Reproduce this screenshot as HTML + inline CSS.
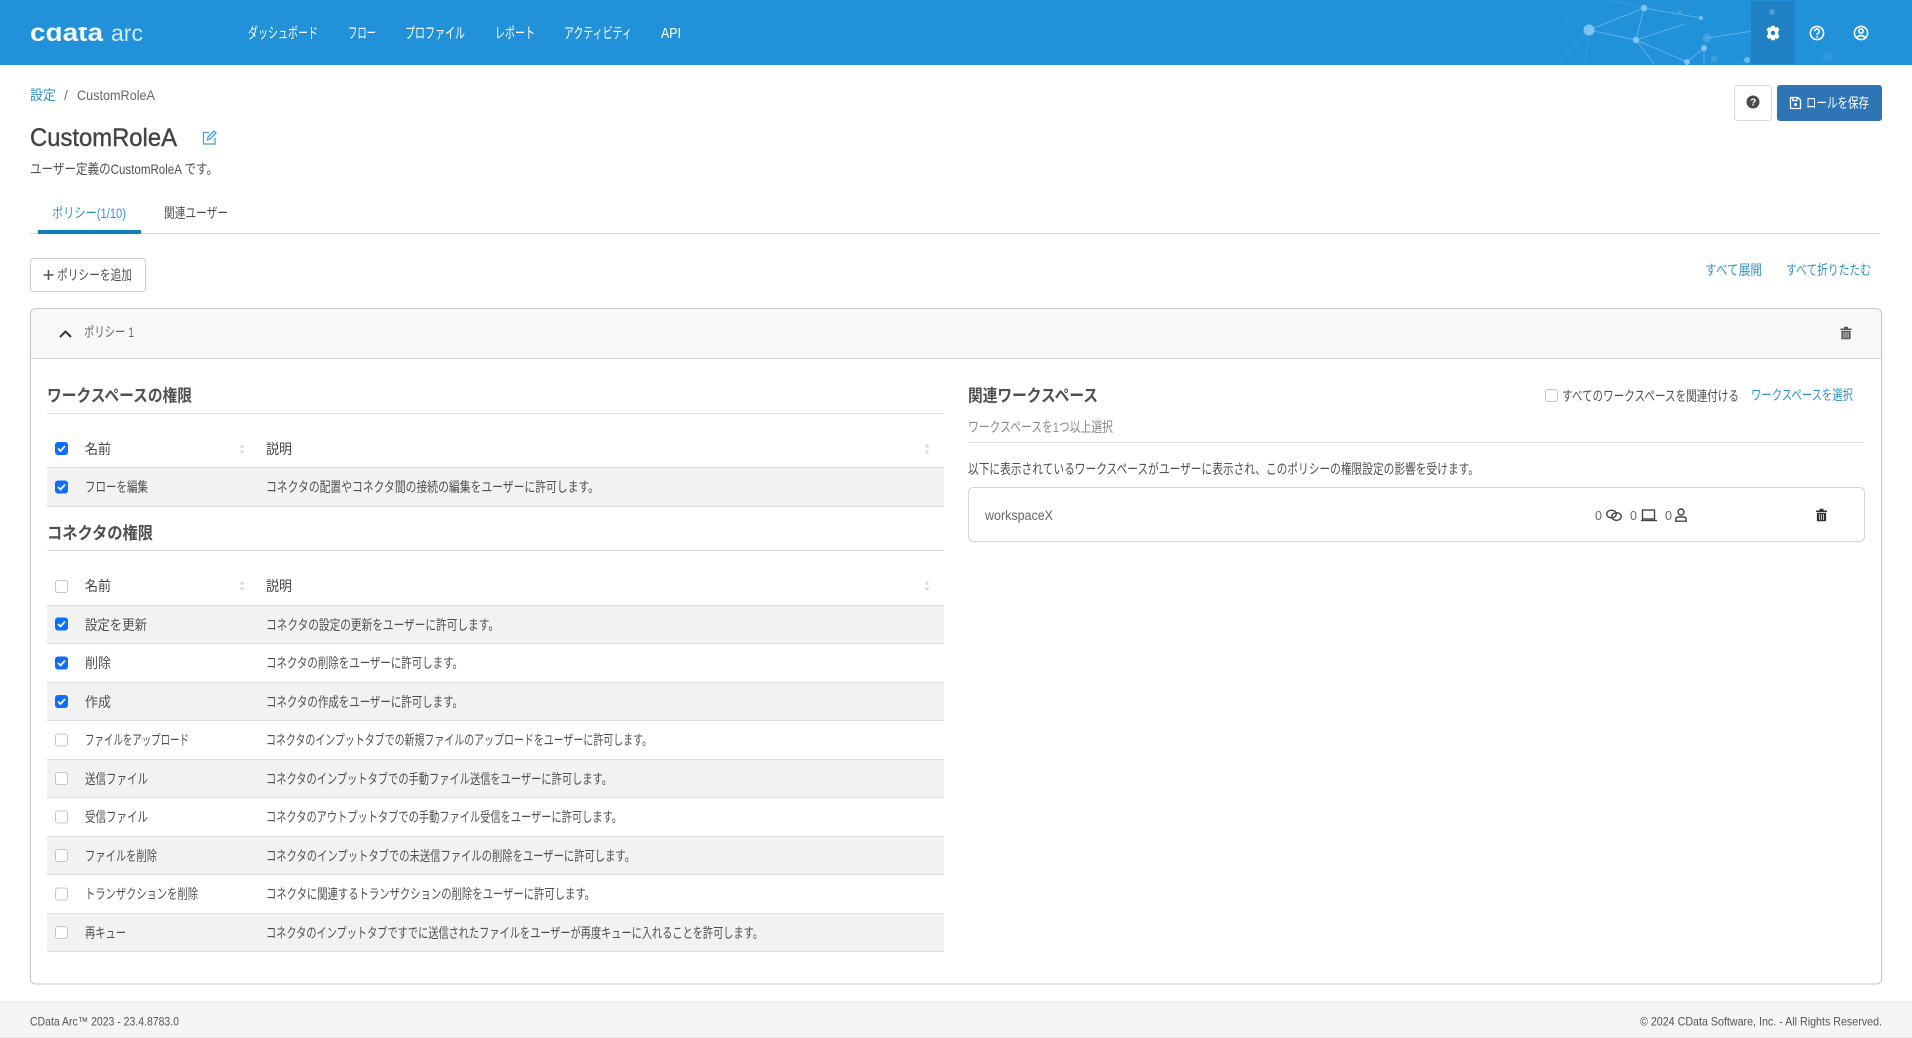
<!DOCTYPE html>
<html lang="ja"><head><meta charset="utf-8"><title>CustomRoleA</title>
<style>
html,body{margin:0;padding:0;background:#fff;width:1912px;height:1038px;overflow:hidden}
svg{display:block}
text{font-family:"Liberation Sans","Noto Sans CJK JP",sans-serif;font-size:14px;fill:#505050}
.n{fill:#fff;font-size:15px}
.l{fill:#3492cb}
.h{font-size:17px;font-weight:700;fill:#505050}
.th{fill:#444}
.g{fill:#8a8a8a}
.f{font-size:12px;fill:#555}
.line{stroke:#dfdfdf;stroke-width:1}
.ck{fill:#0d6efd}
.un{fill:#fff;stroke:#c4c4c4}
.tick{fill:none;stroke:#fff;stroke-width:1.8}
.sort{fill:#d8d8d8}
</style></head><body>
<svg width="1912" height="1038" viewBox="0 0 1912 1038" xmlns="http://www.w3.org/2000/svg" shape-rendering="geometricPrecision">
<defs>
<clipPath id="logo"><rect x="28" y="27" width="78" height="15"/></clipPath>
<g id="c"><rect class="ck" x="-6.5" y="-6.5" width="13" height="13" rx="3"/><path class="tick" d="M-3.5 0L-1 2.5L3.5-2.5"/></g>
<g id="u"><rect class="un" x="-6" y="-6" width="12" height="12" rx="2.5"/></g>
<g id="s"><path class="sort" d="M0-5L2.5-1.5H-2.5ZM0 5L2.5 1.5H-2.5Z"/></g>
<g id="tr"><path d="M-5.5-4.5H5.5V-3H-5.5ZM-2-6.2H2V-4.5H-2ZM-4.6-2.2H4.6V5.4Q4.6 6.2 3.8 6.2H-3.8Q-4.6 6.2-4.6 5.4Z" fill="currentColor"/><path d="M-2.1-1V5M0-1V5M2.1-1V5" stroke="#fff" stroke-width=".7"/></g>
</defs>

<!-- header -->
<rect width="1912" height="65" fill="#2191d9"/>
<rect y="65" width="1912" height="3" fill="#f3fbfa"/>
<g stroke="#8cc9f3" stroke-opacity=".55" stroke-width="1" fill="none">
<path d="M1589 30L1644 8L1636 40ZM1644 8L1701 18M1636 40L1687 62M1636 40L1685 24M1704 48L1687 62M1704 48V65M1636 40L1655 65M1707 38L1760 30"/>
</g>
<g stroke="#8cc9f3" stroke-opacity=".2" stroke-width="1" fill="none">
<path d="M1589 30L1585 65M1589 30L1560 60M1589 30L1550 8M1644 8L1610 0M1747 60L1735 65"/>
</g>
<g fill="#8ccaf5">
<circle cx="1589" cy="30" r="5.5" opacity=".85"/><circle cx="1644" cy="8" r="3.2" opacity=".85"/><circle cx="1636" cy="40" r="3.2" opacity=".85"/><circle cx="1701" cy="18" r="2" opacity=".8"/><circle cx="1704" cy="48" r="3" opacity=".85"/><circle cx="1687" cy="62" r="3" opacity=".85"/><circle cx="1747" cy="60" r="3" opacity=".7"/>
<circle cx="1707" cy="38" r="4.5" opacity=".3"/><circle cx="1680" cy="12" r="2" opacity=".3"/><circle cx="1714" cy="59" r="3.5" opacity=".25"/><circle cx="1827" cy="57" r="5" opacity=".12"/>
</g>
<rect x="1751" y="1" width="44" height="63" fill="#1f80c4"/>
<circle cx="1772" cy="12" r="3" fill="#8ccaf5" opacity=".4"/>
<text x="30" y="41" textLength="73" lengthAdjust="spacingAndGlyphs" clip-path="url(#logo)" style="font-size:25px;font-weight:700;fill:#f4fafe">cdata</text>
<text x="111" y="41" textLength="32" lengthAdjust="spacingAndGlyphs" style="font-size:23px;fill:#d5eafa">arc</text>
<text class="n" x="248" y="38" textLength="70" lengthAdjust="spacingAndGlyphs">ダッシュボード</text>
<text class="n" x="348" y="38" textLength="28" lengthAdjust="spacingAndGlyphs">フロー</text>
<text class="n" x="405" y="38" textLength="60" lengthAdjust="spacingAndGlyphs">プロファイル</text>
<text class="n" x="495" y="38" textLength="40" lengthAdjust="spacingAndGlyphs">レポート</text>
<text class="n" x="564" y="38" textLength="68" lengthAdjust="spacingAndGlyphs">アクティビティ</text>
<text class="n" x="661" y="38" textLength="20" lengthAdjust="spacingAndGlyphs">API</text>
<!-- gear -->
<g transform="translate(1773 33)" fill="#fff">
<path d="M-1.7-7.2H1.7L2.3-5.1L4.3-6L6.6-3.4L5.2-1.8V1.8L6.6 3.4L4.3 6L2.3 5.1L1.7 7.2H-1.7L-2.3 5.1L-4.3 6L-6.6 3.4L-5.2 1.8V-1.8L-6.6-3.4L-4.3-6L-2.3-5.1Z"/>
<circle r="2.2" fill="#1f80c4"/></g>
<g fill="none" stroke="#fff" stroke-width="1.6">
<circle cx="1817" cy="33" r="6.6"/><path d="M1814.7 31.2a2.3 2.3 0 1 1 3.6 1.9c-.8.5-1.3.9-1.3 1.8"/>
<circle cx="1861" cy="33" r="6.6"/><circle cx="1861" cy="31" r="2.2"/><path d="M1856.6 37.5q4.4-3.8 8.8 0"/>
</g>
<circle cx="1817" cy="37" r=".9" fill="#fff"/>

<!-- top actions -->
<rect x="1734.5" y="85.5" width="37" height="35" rx="3" fill="#fff" stroke="#dcdcdc"/>
<circle cx="1753" cy="102" r="6.5" fill="#4a4a4a"/>
<text x="1750.3" y="105.5" style="font-size:10px;font-weight:700;fill:#fff">?</text>
<rect x="1777" y="85" width="105" height="36" rx="3" fill="#2f74b5"/>
<g fill="none" stroke="#fff" stroke-width="1.3"><path d="M1790.5 97.5H1798L1800.5 100V108.5H1790.5Z"/><path d="M1792.8 97.5V100.5H1797V97.5"/></g><circle cx="1795.5" cy="104.5" r="1.5" fill="#fff"/>
<text x="1806" y="108" textLength="63" lengthAdjust="spacingAndGlyphs" style="fill:#fff">ロールを保存</text>

<!-- breadcrumb and title -->
<text class="l" x="30" y="100" textLength="26" lengthAdjust="spacingAndGlyphs">設定</text>
<text x="64" y="100" style="fill:#777">/</text>
<text x="77" y="100" textLength="78" lengthAdjust="spacingAndGlyphs" style="fill:#666">CustomRoleA</text>
<text x="30" y="146" textLength="147" lengthAdjust="spacingAndGlyphs" style="font-size:25px;fill:#444;stroke:#444;stroke-width:.4">CustomRoleA</text>
<g fill="none" stroke="#4a9fd8" stroke-width="1.3"><path d="M209 132.5H203.5V144H215V138"/><path d="M207.5 140L208 137L214 131L216 133L210 139Z"/></g>
<text x="30" y="174" textLength="188" lengthAdjust="spacingAndGlyphs">ユーザー定義のCustomRoleA です。</text>

<!-- tabs -->
<line class="line" x1="30" y1="233.5" x2="1880" y2="233.5"/>
<rect x="38" y="230" width="103" height="4" fill="#0f7fb5"/>
<text class="l" x="52" y="218" textLength="74" lengthAdjust="spacingAndGlyphs">ポリシー(1/10)</text>
<text x="164" y="218" textLength="64" lengthAdjust="spacingAndGlyphs">関連ユーザー</text>

<!-- add -->
<rect x="30.5" y="258.5" width="115" height="33" rx="3" fill="#fff" stroke="#cfcfcf"/>
<path d="M43.5 275H53.5M48.5 270V280" stroke="#555" stroke-width="1.6"/>
<text x="57" y="280" textLength="75" lengthAdjust="spacingAndGlyphs">ポリシーを追加</text>
<text class="l" x="1705" y="275" textLength="57" lengthAdjust="spacingAndGlyphs">すべて展開</text>
<text class="l" x="1786" y="275" textLength="85" lengthAdjust="spacingAndGlyphs">すべて折りたたむ</text>

<!-- card -->
<rect x="30.5" y="308.5" width="1851" height="675.5" rx="5" fill="#fff" stroke="#c8c8c8"/>
<path d="M31 358V314Q31 309 36 309H1876Q1881 309 1881 314V358Z" fill="#f8f8f8"/>
<line x1="31" y1="358.5" x2="1881" y2="358.5" stroke="#d2d2d2"/>
<path d="M60 337L65.5 331.5L71 337" fill="none" stroke="#333" stroke-width="2"/>
<text x="84" y="337" textLength="50" lengthAdjust="spacingAndGlyphs" style="fill:#666">ポリシー 1</text>
<g transform="translate(1846 333)" color="#555"><use href="#tr"/></g>

<!-- workspace permissions -->
<text class="h" x="47" y="401.5" textLength="145" lengthAdjust="spacingAndGlyphs">ワークスペースの権限</text>
<line class="line" x1="47" y1="413.5" x2="944" y2="413.5"/>
<use href="#c" x="61.5" y="448.5"/>
<text class="th" x="85" y="454" textLength="26" lengthAdjust="spacingAndGlyphs">名前</text>
<use href="#s" x="242" y="449"/>
<text class="th" x="266" y="454" textLength="26" lengthAdjust="spacingAndGlyphs">説明</text>
<use href="#s" x="927" y="449"/>
<rect x="47" y="467" width="897" height="39" fill="#f2f2f2"/>
<line class="line" x1="47" y1="467.5" x2="944" y2="467.5"/>
<line class="line" x1="47" y1="506.5" x2="944" y2="506.5"/>
<use href="#c" x="61.5" y="487"/>
<text x="85" y="492" textLength="63" lengthAdjust="spacingAndGlyphs">フローを編集</text>
<text x="266" y="492" textLength="333" lengthAdjust="spacingAndGlyphs">コネクタの配置やコネクタ間の接続の編集をユーザーに許可します。</text>

<!-- connector permissions -->
<text class="h" x="47" y="539" textLength="106" lengthAdjust="spacingAndGlyphs">コネクタの権限</text>
<line class="line" x1="47" y1="550.5" x2="944" y2="550.5"/>
<use href="#u" x="61.5" y="586.5"/>
<text class="th" x="85" y="591" textLength="26" lengthAdjust="spacingAndGlyphs">名前</text>
<use href="#s" x="242" y="586"/>
<text class="th" x="266" y="591" textLength="26" lengthAdjust="spacingAndGlyphs">説明</text>
<use href="#s" x="927" y="586"/>
<rect x="47" y="605" width="897" height="38.5" fill="#f2f2f2"/>
<rect x="47" y="682" width="897" height="38.5" fill="#f2f2f2"/>
<rect x="47" y="759" width="897" height="38.5" fill="#f2f2f2"/>
<rect x="47" y="836" width="897" height="38.5" fill="#f2f2f2"/>
<rect x="47" y="913" width="897" height="38.5" fill="#f2f2f2"/>
<path class="line" d="M47 605.5H944M47 643.5H944M47 682.5H944M47 720.5H944M47 759.5H944M47 797.5H944M47 836.5H944M47 874.5H944M47 913.5H944M47 951.5H944"/>

<use href="#c" x="61.5" y="624"/>
<text x="85" y="630" textLength="62" lengthAdjust="spacingAndGlyphs">設定を更新</text>
<text x="266" y="630" textLength="233" lengthAdjust="spacingAndGlyphs">コネクタの設定の更新をユーザーに許可します。</text>
<use href="#c" x="61.5" y="663"/>
<text x="85" y="668" textLength="26" lengthAdjust="spacingAndGlyphs">削除</text>
<text x="266" y="668" textLength="197" lengthAdjust="spacingAndGlyphs">コネクタの削除をユーザーに許可します。</text>
<use href="#c" x="61.5" y="701.5"/>
<text x="85" y="707" textLength="26" lengthAdjust="spacingAndGlyphs">作成</text>
<text x="266" y="707" textLength="197" lengthAdjust="spacingAndGlyphs">コネクタの作成をユーザーに許可します。</text>
<use href="#u" x="61.5" y="740"/>
<text x="85" y="745" textLength="104" lengthAdjust="spacingAndGlyphs">ファイルをアップロード</text>
<text x="266" y="745" textLength="386" lengthAdjust="spacingAndGlyphs">コネクタのインプットタブでの新規ファイルのアップロードをユーザーに許可します。</text>
<use href="#u" x="61.5" y="778.5"/>
<text x="85" y="784" textLength="63" lengthAdjust="spacingAndGlyphs">送信ファイル</text>
<text x="266" y="784" textLength="346" lengthAdjust="spacingAndGlyphs">コネクタのインプットタブでの手動ファイル送信をユーザーに許可します。</text>
<use href="#u" x="61.5" y="817"/>
<text x="85" y="822" textLength="63" lengthAdjust="spacingAndGlyphs">受信ファイル</text>
<text x="266" y="822" textLength="356" lengthAdjust="spacingAndGlyphs">コネクタのアウトプットタブでの手動ファイル受信をユーザーに許可します。</text>
<use href="#u" x="61.5" y="855.5"/>
<text x="85" y="861" textLength="72" lengthAdjust="spacingAndGlyphs">ファイルを削除</text>
<text x="266" y="861" textLength="369" lengthAdjust="spacingAndGlyphs">コネクタのインプットタブでの未送信ファイルの削除をユーザーに許可します。</text>
<use href="#u" x="61.5" y="894"/>
<text x="85" y="899" textLength="113" lengthAdjust="spacingAndGlyphs">トランザクションを削除</text>
<text x="266" y="899" textLength="329" lengthAdjust="spacingAndGlyphs">コネクタに関連するトランザクションの削除をユーザーに許可します。</text>
<use href="#u" x="61.5" y="932.5"/>
<text x="85" y="938" textLength="41" lengthAdjust="spacingAndGlyphs">再キュー</text>
<text x="266" y="938" textLength="497" lengthAdjust="spacingAndGlyphs">コネクタのインプットタブですでに送信されたファイルをユーザーが再度キューに入れることを許可します。</text>

<!-- related workspaces -->
<text class="h" x="968" y="401.5" textLength="130" lengthAdjust="spacingAndGlyphs">関連ワークスペース</text>
<use href="#u" x="1551.5" y="395.5"/>
<text x="1562" y="401" textLength="177" lengthAdjust="spacingAndGlyphs">すべてのワークスペースを関連付ける</text>
<text class="l" x="1751" y="400" textLength="102" lengthAdjust="spacingAndGlyphs">ワークスペースを選択</text>
<text class="g" x="968" y="432" textLength="145" lengthAdjust="spacingAndGlyphs">ワークスペースを1つ以上選択</text>
<line class="line" x1="968" y1="442.5" x2="1864" y2="442.5"/>
<text x="968" y="474" textLength="511" lengthAdjust="spacingAndGlyphs">以下に表示されているワークスペースがユーザーに表示され、このポリシーの権限設定の影響を受けます。</text>
<rect x="968.5" y="487.5" width="896" height="54" rx="5" fill="#fff" stroke="#d6d6d6"/>
<text x="985" y="520" textLength="68" lengthAdjust="spacingAndGlyphs" style="fill:#666">workspaceX</text>
<text x="1595" y="520" style="fill:#666;font-size:12.5px">0</text>
<text x="1630" y="520" style="fill:#666;font-size:12.5px">0</text>
<text x="1665" y="520" style="fill:#666;font-size:12.5px">0</text>
<g fill="none" stroke="#444" stroke-width="1.4">
<ellipse cx="1611.5" cy="514" rx="4.8" ry="3.8"/>
<ellipse cx="1616.5" cy="516.5" rx="4.8" ry="3.8"/>
<rect x="1642.5" y="510" width="12" height="9"/>
<path d="M1641 520.5H1657"/>
<circle cx="1681" cy="512" r="3"/>
<path d="M1675.8 521.2V519.5Q1675.8 517 1678.5 517H1683.5Q1686.2 517 1686.2 519.5V521.2Z"/>
</g>
<g transform="translate(1821.5 515)" color="#333"><use href="#tr"/></g>

<!-- footer -->
<rect y="1003" width="1912" height="34" fill="#f5f5f5"/>
<line x1="0" y1="1002" x2="1912" y2="1002" stroke="#dcdcdc" stroke-width="1"/>
<line x1="0" y1="1037.5" x2="1912" y2="1037.5" stroke="#e4e4e4"/>
<text class="f" x="30" y="1025.5" textLength="149" lengthAdjust="spacingAndGlyphs">CData Arc™ 2023 - 23.4.8783.0</text>
<text class="f" x="1640" y="1025.5" textLength="242" lengthAdjust="spacingAndGlyphs">© 2024 CData Software, Inc. - All Rights Reserved.</text>
</svg>
</body></html>
